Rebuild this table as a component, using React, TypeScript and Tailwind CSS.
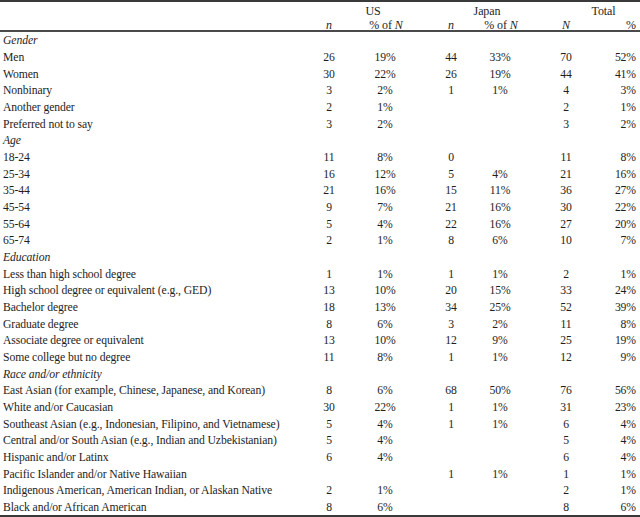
import React from "react"

type Row = {
  label: string
  heading?: boolean
  cells?: (string | number)[]
}

const rows: Row[] = [
  { label: "Gender", heading: true },
  { label: "Men", cells: [26, "19%", 44, "33%", 70, "52%"] },
  { label: "Women", cells: [30, "22%", 26, "19%", 44, "41%"] },
  { label: "Nonbinary", cells: [3, "2%", 1, "1%", 4, "3%"] },
  { label: "Another gender", cells: [2, "1%", "", "", 2, "1%"] },
  { label: "Preferred not to say", cells: [3, "2%", "", "", 3, "2%"] },
  { label: "Age", heading: true },
  { label: "18-24", cells: [11, "8%", 0, "", 11, "8%"] },
  { label: "25-34", cells: [16, "12%", 5, "4%", 21, "16%"] },
  { label: "35-44", cells: [21, "16%", 15, "11%", 36, "27%"] },
  { label: "45-54", cells: [9, "7%", 21, "16%", 30, "22%"] },
  { label: "55-64", cells: [5, "4%", 22, "16%", 27, "20%"] },
  { label: "65-74", cells: [2, "1%", 8, "6%", 10, "7%"] },
  { label: "Education", heading: true },
  { label: "Less than high school degree", cells: [1, "1%", 1, "1%", 2, "1%"] },
  { label: "High school degree or equivalent (e.g., GED)", cells: [13, "10%", 20, "15%", 33, "24%"] },
  { label: "Bachelor degree", cells: [18, "13%", 34, "25%", 52, "39%"] },
  { label: "Graduate degree", cells: [8, "6%", 3, "2%", 11, "8%"] },
  { label: "Associate degree or equivalent", cells: [13, "10%", 12, "9%", 25, "19%"] },
  { label: "Some college but no degree", cells: [11, "8%", 1, "1%", 12, "9%"] },
  { label: "Race and/or ethnicity", heading: true },
  { label: "East Asian (for example, Chinese, Japanese, and Korean)", cells: [8, "6%", 68, "50%", 76, "56%"] },
  { label: "White and/or Caucasian", cells: [30, "22%", 1, "1%", 31, "23%"] },
  { label: "Southeast Asian (e.g., Indonesian, Filipino, and Vietnamese)", cells: [5, "4%", 1, "1%", 6, "4%"] },
  { label: "Central and/or South Asian (e.g., Indian and Uzbekistanian)", cells: [5, "4%", "", "", 5, "4%"] },
  { label: "Hispanic and/or Latinx", cells: [6, "4%", "", "", 6, "4%"] },
  { label: "Pacific Islander and/or Native Hawaiian", cells: ["", "", 1, "1%", 1, "1%"] },
  { label: "Indigenous American, American Indian, or Alaskan Native", cells: [2, "1%", "", "", 2, "1%"] },
  { label: "Black and/or African American", cells: [8, "6%", "", "", 8, "6%"] },
]

// label | US n | US % | JP n | JP % | Total N | Total %
const cols = "grid grid-cols-[313px_32px_78px_56px_42px_90px_29px]"

export default function App() {
  return (
    <div
      className="w-[640px] h-[517px] bg-white text-[#1e1e1e] text-[11.7px] tracking-[-0.1px]"
      style={{ fontFamily: '"Liberation Serif", "Times New Roman", serif' }}
    >
      <div className="h-[1.5px] bg-[#3a3a3a]" />
      {/* header */}
      <div className={`${cols} h-[14.25px] items-center text-[12px]`}>
        <div />
        <div className="col-span-2 text-center pl-[10px]">US</div>
        <div className="col-span-2 text-center pl-[30px]">Japan</div>
        <div className="col-span-2 text-center pl-[46px]">Total</div>
      </div>
      <div className={`${cols} h-[14.25px] items-center italic text-[12px]`}>
        <div />
        <div className="text-center">n</div>
        <div className="text-center pl-[4px]">
          <span className="not-italic">% of </span>N
        </div>
        <div className="text-center">n</div>
        <div className="text-center pl-[2px]">
          <span className="not-italic">% of </span>N
        </div>
        <div className="text-center">N</div>
        <div className="text-right pr-[4px] not-italic">%</div>
      </div>
      <div className="h-[2px] bg-[#4a4a4a]" />
      {/* body */}
      <div>
        {rows.map((r) => (
          <div key={r.label} className={`${cols} h-[16.66px] items-center leading-none pt-[2px]`}>
            <div className={`pl-[3px] whitespace-nowrap ${r.heading ? "italic" : ""}`}>{r.label}</div>
            {r.cells && (
              <>
                <div className="text-center">{r.cells[0]}</div>
                <div className="text-center pl-[2px]">{r.cells[1]}</div>
                <div className="text-center">{r.cells[2]}</div>
                <div className="text-center">{r.cells[3]}</div>
                <div className="text-center">{r.cells[4]}</div>
                <div className="text-right pr-[4px]">{r.cells[5]}</div>
              </>
            )}
          </div>
        ))}
      </div>
      <div className="h-[1.5px] bg-[#3a3a3a]" />
    </div>
  )
}
